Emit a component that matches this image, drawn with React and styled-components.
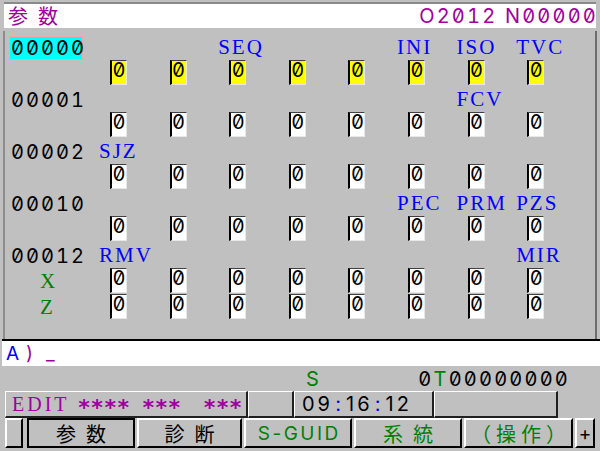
import React from 'react';
import styled, { createGlobalStyle } from 'styled-components';

const GlobalStyle = createGlobalStyle`
  body {
    margin: 0;
    background: #c0c0c0;
  }
`;

const MONO = `"Inter", "Noto Sans", sans-serif`;
const SERIF = `"Liberation Serif", serif`;
const CJK = `"Noto Sans CJK JP", "Noto Sans CJK SC", sans-serif`;

const groups = [
  { no: '00000', active: true, labels: [[2, 'SEQ'], [5, 'INI'], [6, 'ISO'], [7, 'TVC']], rows: [{ axis: '', yellow: true }] },
  { no: '00001', labels: [[6, 'FCV']], rows: [{ axis: '' }] },
  { no: '00002', labels: [[0, 'SJZ']], rows: [{ axis: '' }] },
  { no: '00010', labels: [[5, 'PEC'], [6, 'PRM'], [7, 'PZS']], rows: [{ axis: '' }] },
  { no: '00012', labels: [[0, 'RMV'], [7, 'MIR']], rows: [{ axis: 'X' }, { axis: 'Z' }] },
];

const softkeys = [
  { text: '参数', active: true },
  { text: '診断', w: 105 },
  { text: 'S-GUID', green: true, mono: true },
  { text: '系統', green: true },
  { text: '（操作）', green: true, w: 109, ls: 5 },
];

const App = () => {
  return (
    <>
      <GlobalStyle />
      <Screen>
        <TitleBar>
          <TitleText>参数</TitleText>
          <ProgNo>O2012 N00000</ProgNo>
        </TitleBar>

        <Panel>
          {groups.map((g) => (
            <React.Fragment key={g.no}>
              <Row>
                <RowNo $active={g.active}>{g.no}</RowNo>
                {g.labels.map(([col, name]) => (
                  <BitLabel key={name} $col={col}>{name}</BitLabel>
                ))}
              </Row>
              {g.rows.map((r, i) => (
                <Row key={i}>
                  <Axis>{r.axis}</Axis>
                  {Array.from({ length: 8 }).map((_, k) => (
                    <Cell key={k} $yellow={r.yellow}>0</Cell>
                  ))}
                </Row>
              ))}
            </React.Fragment>
          ))}
        </Panel>

        <InputLine>
          <Prompt>A</Prompt>
          <PromptMark>)</PromptMark>
          <PromptMark>_</PromptMark>
        </InputLine>

        <InfoRow>
          <Spindle>S</Spindle>
          <ToolNo>0<Green>T</Green>00000000</ToolNo>
        </InfoRow>

        <StatusRow>
          <StatusBox $w={243}>
            <ModeText>EDIT</ModeText>
            <Stars $gap={8}>****</Stars>
            <Stars $gap={12}>***</Stars>
            <Stars $gap={22}>***</Stars>
          </StatusBox>
          <StatusBox $w={46} />
          <StatusBox $w={140}>
            <Clock>
              09<Colon>:</Colon>16<Colon>:</Colon>12
            </Clock>
          </StatusBox>
          <StatusBox $w={124} />
        </StatusRow>

        <KeyRow>
          <KeyButton $w={18} />
          {softkeys.map((k) => (
            <KeyButton
              key={k.text}
              $w={k.w || 108}
              $active={k.active}
              $green={k.green}
              $mono={k.mono}
              $ls={k.ls}
            >
              {k.text}
            </KeyButton>
          ))}
          <KeyButton $w={20} $mono $ls={0}>+</KeyButton>
        </KeyRow>
      </Screen>
    </>
  );
};

const Screen = styled.div`
  width: 600px;
  height: 451px;
  background: #c0c0c0;
  display: flex;
  flex-direction: column;
  overflow: hidden;
  font-family: ${MONO};
`;

const TitleBar = styled.div`
  margin: 2px 4px 0;
  border-top: 2px solid #8a8a8a;
  background: #fff;
  height: 24px;
  display: flex;
  align-items: center;
  justify-content: space-between;
  padding-left: 4px;
`;

const TitleText = styled.span`
  font-family: ${CJK};
  font-size: 20px;
  letter-spacing: 10px;
  color: #a000a0;
  line-height: 24px;
`;

const ProgNo = styled.span`
  font-family: ${MONO};
  font-feature-settings: "zero" 1, "tnum" 1;
  font-size: 20px;
  letter-spacing: 2.2px;
  color: #a000a0;
  line-height: 24px;
  margin-right: -2px;
`;

const Panel = styled.div`
  margin: 3px 3px 0;
  height: 308px;
  box-sizing: border-box;
  border-left: 2px solid #8c8c8c;
  border-right: 2px solid #6c6c6c;
  padding: 3px 0 0 5px;
`;

const Row = styled.div`
  display: grid;
  grid-template-columns: 100px repeat(8, 59.6px);
  height: 26px;
  align-items: start;
`;

const RowNo = styled.div`
  grid-column: 1;
  width: 74px;
  height: 24px;
  margin: 2px 0 0 -1px;
  box-sizing: border-box;
  padding-left: 1px;
  background: ${(p) => (p.$active ? '#00ffff' : 'transparent')};
  border: 1px solid ${(p) => (p.$active ? '#f0a8a8' : 'transparent')};
  font-feature-settings: "zero" 1, "tnum" 1;
  font-size: 20px;
  letter-spacing: 2px;
  line-height: 22px;
  color: #000;
`;

const BitLabel = styled.div`
  grid-column: ${(p) => p.$col + 2};
  grid-row: 1;
  margin-left: -11px;
  font-family: ${SERIF};
  font-size: 21px;
  letter-spacing: 2px;
  line-height: 26px;
  color: #0000ff;
  white-space: nowrap;
`;

const Axis = styled.div`
  grid-column: 1;
  padding-left: 30px;
  font-family: ${SERIF};
  font-size: 21px;
  line-height: 26px;
  color: #008000;
`;

const Cell = styled.div`
  width: 17px;
  height: 25px;
  box-sizing: border-box;
  background: ${(p) => (p.$yellow ? '#ffff00' : '#fff')};
  border-left: 2px solid #000;
  border-top: 1px solid #404040;
  border-right: 1px solid #e8e8e8;
  border-bottom: 1px solid #e8e8e8;
  font-feature-settings: "zero" 1, "tnum" 1;
  font-size: 20px;
  line-height: 19px;
  text-align: center;
  color: #000;
`;

const InputLine = styled.div`
  margin-left: 2px;
  border-top: 2px solid #000;
  background: #fff;
  height: 25px;
  display: flex;
  align-items: center;
  gap: 5px;
  padding-left: 4px;
  font-size: 19px;
`;

const Prompt = styled.span`
  color: #0000ff;
  width: 15px;
`;

const PromptMark = styled.span`
  color: #a000a0;
  width: 15px;
`;

const InfoRow = styled.div`
  height: 25px;
  display: flex;
  align-items: center;
  padding: 0 30px 0 306px;
  font-size: 20px;
  font-feature-settings: "zero" 1, "tnum" 1;
`;

const Spindle = styled.span`
  color: #008000;
`;

const ToolNo = styled.span`
  margin-left: auto;
  letter-spacing: 2.2px;
  color: #000;
`;

const Green = styled.span`
  color: #008000;
`;

const StatusRow = styled.div`
  height: 27px;
  display: flex;
  padding-left: 5px;
`;

const StatusBox = styled.div`
  width: ${(p) => p.$w}px;
  box-sizing: border-box;
  border-top: 1px solid #fff;
  border-left: 1px solid #fff;
  border-right: 2px solid #202020;
  border-bottom: 2px solid #202020;
  display: flex;
  align-items: center;
  overflow: hidden;
  white-space: pre;
`;

const ModeText = styled.span`
  padding-left: 6px;
  font-family: ${SERIF};
  font-size: 20px;
  letter-spacing: 3px;
  color: #a000a0;
`;

const Stars = styled.span`
  margin-left: ${(p) => p.$gap}px;
  font-family: "DejaVu Sans Mono", monospace;
  font-weight: bold;
  font-size: 22px;
  letter-spacing: -0.2px;
  line-height: 20px;
  padding-top: 7px;
  color: #a000a0;
`;

const Clock = styled.span`
  padding-left: 7px;
  font-size: 20px;
  letter-spacing: 3px;
  color: #000;
`;

const Colon = styled.span`
  display: inline-block;
  width: 13px;
  text-align: center;
  color: #0000ff;
`;

const KeyRow = styled.div`
  flex: 1;
  display: flex;
  gap: 2px;
  padding-left: 5px;
`;

const KeyButton = styled.div`
  width: ${(p) => p.$w}px;
  height: 30px;
  box-sizing: border-box;
  border-style: solid;
  border-width: 2px;
  border-color: ${(p) => (p.$active ? '#000' : '#fff #000 #000 #fff')};
  display: flex;
  align-items: center;
  justify-content: center;
  font-family: ${(p) => (p.$mono ? MONO : CJK)};
  font-size: ${(p) => (p.$mono ? '19px' : '20px')};
  letter-spacing: ${(p) => (p.$ls !== undefined ? p.$ls : p.$mono ? 2.5 : 10)}px;
  text-indent: ${(p) => (p.$ls !== undefined ? p.$ls : p.$mono ? 2.5 : 10)}px;
  color: ${(p) => (p.$green ? '#008000' : '#000')};
  white-space: pre;
  overflow: hidden;
  &:first-child {
    margin-right: 2px;
  }
`;

export default App;
